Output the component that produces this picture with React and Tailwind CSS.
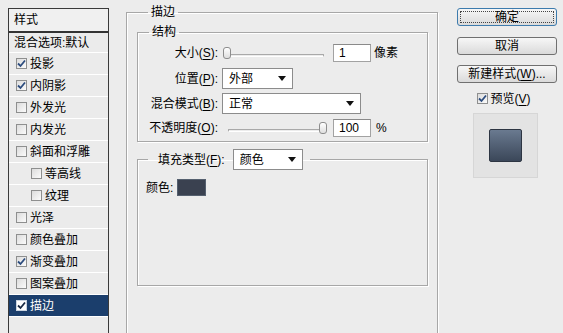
import React from "react";

const font = { fontFamily: '"Liberation Sans", "Noto Sans CJK SC", sans-serif' };

const Check = ({ checked, dark }) => (
  <span
    className={
      "inline-flex items-center justify-center w-[11px] h-[11px] border shrink-0 " +
      (dark
        ? "border-[#c9d3e0] bg-white"
        : "border-[#8e8f8f] bg-gradient-to-br from-[#dcdcdc] to-[#fbfbfb]")
    }
  >
    {checked && (
      <svg width="9" height="9" viewBox="0 0 9 9">
        <path
          d="M1 4.5 L3.5 7 L8 1.5"
          fill="none"
          stroke={dark ? "#1a2a44" : "#2c4c7e"}
          strokeWidth="1.8"
        />
      </svg>
    )}
  </span>
);

const Arrow = () => (
  <svg width="8" height="5" viewBox="0 0 8 5" className="shrink-0">
    <path d="M0 0 H8 L4 5 Z" fill="#111" />
  </svg>
);

const U = ({ children }) => <span className="underline underline-offset-2">{children}</span>;

const Select = ({ value, width }) => (
  <div
    className={
      "flex items-center justify-between h-[21px] bg-white border border-[#8c8c8c] pl-[6px] pr-[6px] " + width
    }
  >
    <span className="text-[12px] leading-none">{value}</span>
    <Arrow />
  </div>
);

const Slider = ({ atEnd }) => (
  <div className="relative w-[104px] h-[14px]">
    <div className="absolute left-[3px] right-[3px] top-[8px] h-[3px] border border-[#a9a9a9] border-b-white rounded-[1px]" />
    <div
      className={
        "absolute top-[1px] w-[8px] h-[12px] rounded-[3px] border border-[#8d8d8d] bg-gradient-to-b from-white to-[#dedede] " +
        (atEnd ? "right-[2px]" : "left-[0px]")
      }
    />
  </div>
);

const Field = ({ value }) => (
  <div className="w-[38px] h-[18px] bg-white border border-[#a2a2a2] border-t-[#8a8a8a] flex items-center pl-[5px] text-[12px]">
    {value}
  </div>
);

const items = [
  { label: "投影", checked: true },
  { label: "内阴影", checked: true },
  { label: "外发光" },
  { label: "内发光" },
  { label: "斜面和浮雕" },
  { label: "等高线", sub: true },
  { label: "纹理", sub: true },
  { label: "光泽" },
  { label: "颜色叠加" },
  { label: "渐变叠加", checked: true },
  { label: "图案叠加" },
  { label: "描边", checked: true, active: true },
];

const Button = ({ children, focus }) => (
  <div
    className={
      "w-[100px] h-[18px] rounded-[3px] border flex items-center justify-center text-[12px] bg-gradient-to-b from-[#f7f7f7] to-[#dadada] " +
      (focus ? "border-[#3d7bad] p-[2px]" : "border-[#707070]")
    }
  >
    {focus ? (
      <div className="w-full h-full border border-dotted border-[#444] flex items-center justify-center">
        {children}
      </div>
    ) : (
      children
    )}
  </div>
);

export default function App() {
  return (
    <div
      style={font}
      className="w-[563px] h-[333px] bg-[#ececec] flex overflow-hidden text-[12px] text-black leading-none"
    >
      {/* style list */}
      <div className="pl-[8px] pt-[8px] shrink-0">
        <div className="w-[101px] h-[340px] border border-[#3a3a3a] bg-[#ebebeb]">
          <div className="h-[24px] flex items-center pl-[5px] border-b-2 border-[#333] bg-[#f0f0f0]">样式</div>
          <div className="h-[20px] flex items-center pl-[5px] border-b border-white">混合选项:默认</div>
          {items.map((it) => (
            <div
              key={it.label}
              className={
                "h-[22px] flex items-center gap-[3px] border-b border-white " +
                (it.sub ? "pl-[22px] " : "pl-[7px] ") +
                (it.active ? "bg-[#1b3e6c] text-white" : "")
              }
            >
              <Check checked={it.checked} dark={it.active} />
              <span>{it.label}</span>
            </div>
          ))}
        </div>
      </div>

      {/* stroke settings */}
      <fieldset className="ml-[17px] mt-[5px] w-[312px] h-[345px] shrink-0 border border-[#a7a7a7] shadow-[1px_1px_0_#fff,inset_1px_1px_0_#fff] pl-[10px]">
        <legend className="ml-[11px] px-[3px] h-[14px] leading-[14px]">描边</legend>

        <fieldset className="mt-[6px] w-[291px] h-[117px] border border-[#a7a7a7] shadow-[1px_1px_0_#fff,inset_1px_1px_0_#fff]">
          <legend className="ml-[11px] px-[3px] h-[14px] leading-[14px]">结构</legend>
          <div className="pt-[4px] flex flex-col">
            <div className="h-[20px] flex items-center">
              <div className="w-[80px] text-right">
                大小(<U>S</U>):
              </div>
              <div className="ml-[5px]">
                <Slider />
              </div>
              <div className="ml-[6px]">
                <Field value="1" />
              </div>
              <span className="ml-[3px]">像素</span>
            </div>
            <div className="h-[21px] mt-[5px] flex items-center">
              <div className="w-[80px] text-right">
                位置(<U>P</U>):
              </div>
              <div className="ml-[4px]">
                <Select value="外部" width="w-[71px]" />
              </div>
            </div>
            <div className="h-[21px] mt-[4px] flex items-center">
              <div className="w-[80px] text-right">
                混合模式(<U>B</U>):
              </div>
              <div className="ml-[4px]">
                <Select value="正常" width="w-[139px]" />
              </div>
            </div>
            <div className="h-[20px] mt-[4px] flex items-center">
              <div className="w-[80px] text-right">
                不透明度(<U>O</U>):
              </div>
              <div className="ml-[7px]">
                <Slider atEnd />
              </div>
              <div className="ml-[4px]">
                <Field value="100" />
              </div>
              <span className="ml-[5px]">%</span>
            </div>
          </div>
        </fieldset>

        <fieldset className="mt-[7px] w-[291px] h-[137px] border border-[#a7a7a7] shadow-[1px_1px_0_#fff,inset_1px_1px_0_#fff]">
          <legend className="ml-[10px] pl-[10px] pr-[7px]">
            <div className="flex items-center">
              <span>
                填充类型(<U>F</U>):
              </span>
              <div className="ml-[8px]">
                <Select value="颜色" width="w-[70px]" />
              </div>
            </div>
          </legend>
          <div className="pt-[9px] pl-[8px] flex items-center">
            <span>颜色:</span>
            <div className="ml-[4px] w-[29px] h-[17px] bg-[#3a4150] border border-[#55606f]" />
          </div>
        </fieldset>
      </fieldset>

      {/* buttons */}
      <div className="ml-[19px] pt-[8px] flex flex-col shrink-0">
        <Button focus>确定</Button>
        <div className="mt-[11px]">
          <Button>取消</Button>
        </div>
        <div className="mt-[10px]">
          <Button>
            新建样式(<U>W</U>)...
          </Button>
        </div>
        <div className="mt-[9px] h-[13px] flex items-center justify-center gap-[2px] pr-[6px]">
          <Check checked />
          <span>
            预览(<U>V</U>)
          </span>
        </div>
        <div className="mt-[8px] ml-[16px] w-[65px] h-[65px] bg-[#e3e3e3] border border-[#d6d6d6] flex items-center justify-center">
          <div className="w-[33px] h-[33px] rounded-[2px] border border-[#2d3542] bg-gradient-to-b from-[#6a7a90] to-[#3b4759]" />
        </div>
      </div>
    </div>
  );
}
